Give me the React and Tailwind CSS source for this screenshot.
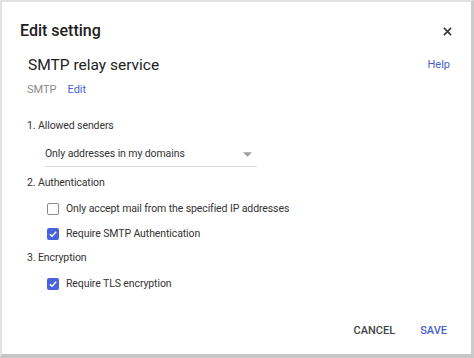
import React, { useState } from 'react';

const FONT = { fontFamily: 'Roboto, "Liberation Sans", Arial, sans-serif' };

const Checkbox = ({ checked, onChange, label }) => (
  <label className="flex items-center h-[25px] pl-[45px] cursor-pointer">
    <span
      onClick={onChange}
      className={`w-[12px] h-[12px] rounded-[2px] flex items-center justify-center ${
        checked ? 'bg-[#4a63dc]' : 'border-[1.5px] border-[#8a8a8a] bg-white'
      }`}
    >
      {checked && (
        <svg viewBox="0 0 12 12" className="w-[10px] h-[10px]">
          <path d="M2.2 6.2 L4.8 8.7 L9.8 3.4" fill="none" stroke="white" strokeWidth="1.7" />
        </svg>
      )}
    </span>
    <span className="ml-[7px] text-[10.5px] tracking-[-0.1px] text-[#333333]">{label}</span>
  </label>
);

export default function App() {
  const [ipOnly, setIpOnly] = useState(false);
  const [smtpAuth, setSmtpAuth] = useState(true);
  const [tls, setTls] = useState(true);

  return (
    <div
      className="w-[474px] h-[358px] bg-white flex flex-col border-l-2 border-t-2 border-r-[3px] border-b-[4px] border-l-[#e2e2e2] border-t-[#e2e2e2] border-r-[#cbcbcb] border-b-[#c6c6c6]"
      style={FONT}
    >
      {/* titulo */}
      <div className="flex items-center justify-between pl-[18px] pr-[12px] pt-[19px]">
        <h1 className="text-[16px] leading-[20px] font-medium text-[#212121]">Edit setting</h1>
        <button className="w-[24px] h-[20px] flex items-center justify-center text-[#444]">
          <svg viewBox="0 0 10 10" className="w-[9px] h-[9px]">
            <path d="M1 1 L9 9 M9 1 L1 9" stroke="#3a3a3a" strokeWidth="1.8" />
          </svg>
        </button>
      </div>

      <div className="flex items-center justify-between pl-[26px] pr-[21px] mt-[14px]">
        <h2 className="text-[15.5px] leading-[20px] text-[#212121]">SMTP relay service</h2>
        <a className="text-[11px] leading-[20px] text-[#4a5fd6]">Help</a>
      </div>

      <div className="flex items-center pl-[25px] mt-[7px] text-[11px] leading-[16px]">
        <span className="text-[#8a8a8a]">SMTP</span>
        <a className="ml-[11px] text-[#4a5fd6]">Edit</a>
      </div>

      {/* 1 */}
      <div className="pl-[25px] mt-[20px] text-[10.5px] tracking-[-0.1px] leading-[16px] text-[#333333]">1. Allowed senders</div>
      <div className="ml-[43px] mt-[8px] w-[212px] h-[25px] flex items-center justify-between border-b border-[#dcdcdc]">
        <span className="text-[10.5px] tracking-[-0.1px] text-[#333333]">Only addresses in my domains</span>
        <svg viewBox="0 0 10 5" className="w-[9px] h-[5px] mr-[5px]">
          <path d="M0 0 L10 0 L5 5 Z" fill="#9e9e9e" />
        </svg>
      </div>

      {/* 2 */}
      <div className="pl-[25px] mt-[8px] text-[10.5px] tracking-[-0.1px] leading-[16px] text-[#333333]">2. Authentication</div>
      <div className="mt-[5px] flex flex-col">
        <Checkbox
          checked={ipOnly}
          onChange={() => setIpOnly(v => !v)}
          label="Only accept mail from the specified IP addresses"
        />
        <Checkbox checked={smtpAuth} onChange={() => setSmtpAuth(v => !v)} label="Require SMTP Authentication" />
      </div>

      {/* 3 */}
      <div className="pl-[25px] mt-[4px] text-[10.5px] tracking-[-0.1px] leading-[16px] text-[#333333]">3. Encryption</div>
      <div className="mt-[5px]">
        <Checkbox checked={tls} onChange={() => setTls(v => !v)} label="Require TLS encryption" />
      </div>

      <div className="mt-auto flex justify-end items-center gap-[9px] pr-[16px] pb-[3px] h-[42px]">
        <button className="h-[36px] px-[8px] text-[11px] font-medium text-[#444444]">CANCEL</button>
        <button className="h-[36px] px-[8px] text-[11px] font-medium text-[#4a5fd6]">SAVE</button>
      </div>
    </div>
  );
}
